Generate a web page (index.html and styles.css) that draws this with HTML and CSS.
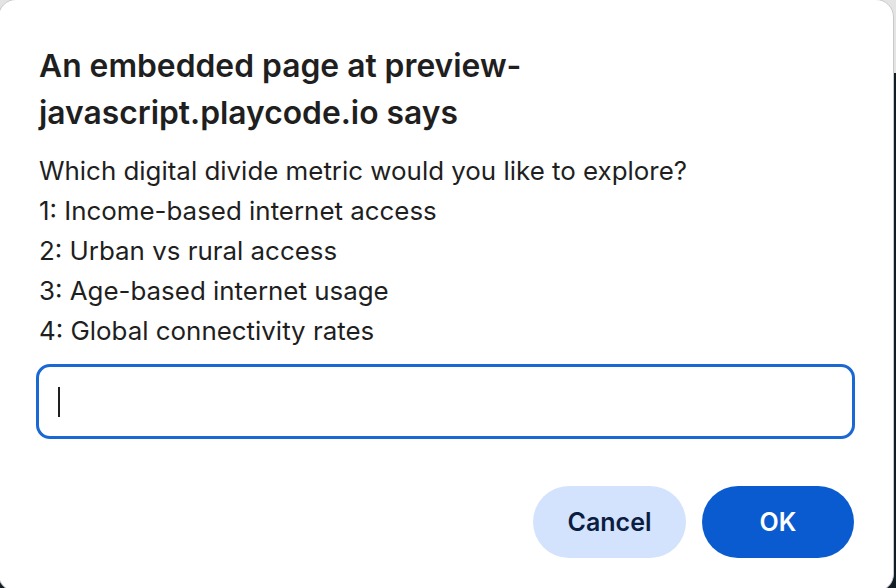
FILE: index.html
```html
<!DOCTYPE html>
<html lang="en">
<head>
<meta charset="utf-8">
<title>Prompt</title>
<link rel="stylesheet" href="styles.css">
</head>
<body>
<div class="dialog" role="dialog">
  <h1 class="title">An embedded page at preview-javascript.playcode.io says</h1>
  <div class="message">
    <p>Which digital divide metric would you like to explore?</p>
    <p>1: Income-based internet access</p>
    <p>2: Urban vs rural access</p>
    <p>3: Age-based internet usage</p>
    <p>4: Global connectivity rates</p>
  </div>
  <div class="field"><span class="caret"></span></div>
  <div class="actions">
    <button class="btn btn-cancel" type="button">Cancel</button>
    <button class="btn btn-ok" type="button">OK</button>
  </div>
</div>
</body>
</html>
```

FILE: styles.css
```css
* { box-sizing: border-box; }

html, body {
  margin: 0;
  width: 896px;
  height: 588px;
  overflow: hidden;
}

body {
  position: relative;
  background: linear-gradient(to bottom, #e4e4e4 0, #e4e4e4 73px, #131d26 73px, #131d26 100%);
  font-family: Inter, "Noto Sans", "Liberation Sans", sans-serif;
  color: #1f1f1f;
}

.dialog {
  position: absolute;
  left: -2px;
  top: -1px;
  width: 896px;
  height: 593px;
  background: #ffffff;
  border: 1px solid #c9c9c9;
  border-radius: 18px;
  padding: 42px 38px 0 37px;
  display: flex;
  flex-direction: column;
}

.title {
  margin: 0 0 15px 3px;
  max-width: 620px;
  font-size: 31.8px;
  font-weight: 600;
  line-height: 47px;
  color: #1f1f1f;
}

.message {
  margin-left: 3px;
  font-size: 25.9px;
  line-height: 40px;
  color: #1f1f1f;
}

.message p {
  margin: 0;
}

.field {
  margin-top: 13px;
  height: 75px;
  border: 3px solid #1a68d3;
  border-radius: 14px;
  display: flex;
  align-items: center;
  padding-left: 19px;
}

.caret {
  display: block;
  width: 2px;
  height: 30px;
  background: #1f1f1f;
}

.actions {
  margin-top: 47px;
  display: flex;
  justify-content: flex-end;
  gap: 16px;
  padding-right: 1px;
}

.btn {
  height: 72px;
  border: none;
  border-radius: 36px;
  font-family: inherit;
  font-size: 25px;
  font-weight: 600;
  padding: 0;
  cursor: pointer;
}

.btn-cancel {
  width: 153px;
  background: #d3e3fd;
  color: #0b1d41;
}

.btn-ok {
  width: 152px;
  background: #0b5bd0;
  color: #ffffff;
}
```
